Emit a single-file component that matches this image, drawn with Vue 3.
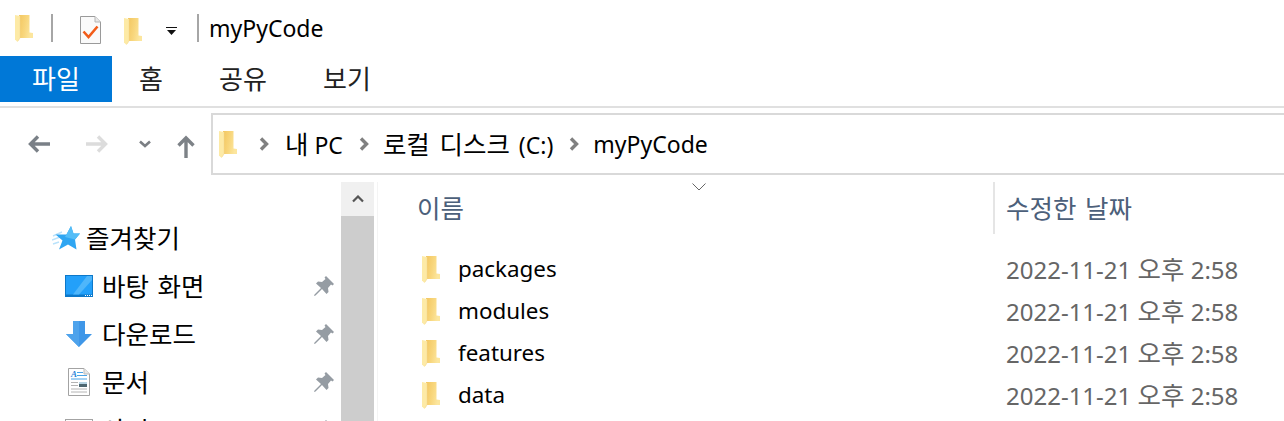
<script setup>
const quick = ['packages', 'modules', 'features', 'data']
</script>

<template>
  <div class="window">
    <svg class="defs" width="0" height="0" aria-hidden="true">
      <defs>
        <linearGradient id="fg" x1="0" y1="0" x2="1" y2="0.3">
          <stop offset="0" stop-color="#f3c65f" />
          <stop offset="0.55" stop-color="#f8d67c" />
          <stop offset="1" stop-color="#fce69e" />
        </linearGradient>
        <symbol id="folder" viewBox="0 0 18 27">
          <path d="M4 0H14.5V17.5L18 18V23H4Z" fill="url(#fg)" />
          <path d="M0 0L5 1V23L4.5 24L2.5 27L0 24.5Z" fill="#fdeaa6" />
          <path d="M5 1V23L3 26" fill="none" stroke="#f0d590" stroke-width=".5" />
        </symbol>
        <symbol id="pin" viewBox="0 0 20 20">
          <path d="M12 0L20 8L18.500 9.500L17 8.500L14 12L14.500 16L12.500 18L8 13L1.500 19.500L0 20L.5 18.500L7 12L2 7.500L4 5.500L8 6L11.500 3L10.500 1.500Z" fill="#959ca3" />
        </symbol>
      </defs>
    </svg>

    <header class="titlebar">
      <svg class="folder"><use href="#folder" /></svg>
      <span class="sep sep-a"></span>
      <svg class="doc" viewBox="0 0 21 28" width="21" height="28">
        <path d="M.5.5H15L20.500 6V27.500H.5Z" fill="#fafafa" stroke="#9a9a9a" />
        <path d="M15 .5V6H20.500" fill="#e8e8e8" stroke="#b5b5b5" />
        <path d="M3.500 15.500L8.500 21L17.500 10.500" fill="none" stroke="#f25c19" stroke-width="2.600" />
      </svg>
      <svg class="folder folder-b"><use href="#folder" /></svg>
      <svg class="drop" viewBox="0 0 11 8" width="11" height="8">
        <path d="M0 .5H11" stroke="#111" />
        <path d="M1 3H10L5.500 8Z" fill="#111" />
      </svg>
      <span class="sep sep-b"></span>
      <span class="title">myPyCode</span>
    </header>

    <nav class="tabs">
      <a class="tab tab-file">파일</a>
      <a class="tab tab-home">홈</a>
      <a class="tab tab-share">공유</a>
      <a class="tab tab-view">보기</a>
    </nav>

    <section class="toolbar">
      <div class="navs">
        <svg viewBox="0 0 22 18" width="22" height="18">
          <path d="M22 9H3M10 1.500L2.500 9L10 16.500" fill="none" stroke="#7a8087" stroke-width="3.400" />
        </svg>
        <svg class="forward" viewBox="0 0 22 18" width="22" height="18">
          <path d="M0 9H19M12 1.500L19.500 9L12 16.500" fill="none" stroke="#dcdcdc" stroke-width="3.400" />
        </svg>
        <svg class="recent" viewBox="0 0 12 8" width="12" height="8">
          <path d="M1 1.500L6 6L11 1.500" fill="none" stroke="#7b7f84" stroke-width="2.600" />
        </svg>
        <svg class="up" viewBox="0 0 18 23" width="18" height="23">
          <path d="M9 23V3M1.500 10.500L9 3L16.500 10.500" fill="none" stroke="#7d8287" stroke-width="3.400" />
        </svg>
      </div>
      <div class="address">
        <svg class="folder"><use href="#folder" /></svg>
        <svg class="crumb crumb-first" viewBox="0 0 10 14" width="10" height="14"><path d="M2 1.500L7.500 7L2 12.500" fill="none" stroke="#808080" stroke-width="3.400" /></svg>
        <span class="part"><span class="ko">내</span> PC</span>
        <svg class="crumb" viewBox="0 0 10 14" width="10" height="14"><path d="M2 1.500L7.500 7L2 12.500" fill="none" stroke="#808080" stroke-width="3.400" /></svg>
        <span class="part part-disk"><span class="ko">로컬 디스크</span> (C:)</span>
        <svg class="crumb" viewBox="0 0 10 14" width="10" height="14"><path d="M2 1.500L7.500 7L2 12.500" fill="none" stroke="#808080" stroke-width="3.400" /></svg>
        <span class="part">myPyCode</span>
      </div>
    </section>

    <main class="body">
      <aside class="side">
        <div class="tree">
          <div class="row fav">
            <svg class="star" viewBox="0 0 28 24" width="28" height="24">
              <path d="M1 10L10 6M0 14L8 11M1 18L7 16" stroke="#b9e2fb" stroke-width="1.400" />
              <path d="M19 0L21.500 7.500H28L23 13.500L24.500 23.500L16 18.500L7 23.500L10.500 14.500L3.500 8.500H14.500Z" fill="#2fa6f2" />
              <path d="M19 0L21.500 7.500H28L23 13.500L13 11Z" fill="#54bdf7" />
            </svg>
            <span class="ko">즐겨찾기</span>
          </div>
          <div class="row item">
            <svg class="ico" viewBox="0 0 28 22" width="28" height="22">
              <rect width="28" height="22" fill="#0d78c9" />
              <rect x="1" y="1" width="26" height="18.500" fill="#23a0fa" />
              <path d="M8 19.500L22 1H27V5L14 19.500Z" fill="#4fb6fb" />
              <path d="M20 20.500H27" stroke="#fff" stroke-dasharray="1 1" />
            </svg>
            <span class="ko">바탕 화면</span>
            <svg class="pin"><use href="#pin" /></svg>
          </div>
          <div class="row item">
            <svg class="ico" viewBox="0 0 28 26" width="28" height="26">
              <path d="M8 0H20V13H27L14 26L1 13H8Z" fill="#3f97e8" />
              <path d="M8 0H14V26L1 13H8Z" fill="#4ea3ec" />
            </svg>
            <span class="ko">다운로드</span>
            <svg class="pin"><use href="#pin" /></svg>
          </div>
          <div class="row item">
            <svg class="ico" viewBox="0 0 28 28" width="28" height="28">
              <path d="M3.500.5H19L24.500 6V27.500H3.500Z" fill="#fff" stroke="#a3a3a3" />
              <path d="M19 .5V6H24.500" fill="#e6e6e6" stroke="#bbb" />
              <text x="6" y="9" class="doc-a">A</text>
              <path d="M12 4.500H18M12 7.500H22M6 11H22" stroke="#4aa3e6" />
              <path d="M6 14.500H13M6 17.500H13M6 21H22M6 24H22" stroke="#b4b4b4" />
              <rect x="14" y="14" width="8" height="5" fill="#4d6670" />
              <rect x="14" y="14" width="8" height="2" fill="#b6d4e4" />
            </svg>
            <span class="ko">문서</span>
            <svg class="pin"><use href="#pin" /></svg>
          </div>
          <div class="row item">
            <svg class="ico" viewBox="0 0 28 22" width="28" height="22">
              <rect x=".5" y=".5" width="27" height="21" fill="#fff" stroke="#a3a3a3" />
            </svg>
            <span class="ko">사진</span>
            <svg class="pin"><use href="#pin" /></svg>
          </div>
        </div>
        <div class="scrollbar">
          <div class="scroll-up">
            <svg viewBox="0 0 12 8" width="12" height="8"><path d="M1 6.500L6 1.500L11 6.500" fill="none" stroke="#555" stroke-width="2.200" /></svg>
          </div>
          <div class="thumb"></div>
        </div>
        <div class="splitter"></div>
      </aside>

      <div class="files">
        <svg class="sort" viewBox="0 0 14 8" width="14" height="8"><path d="M.5 .5L7 7L13.500 .5" fill="none" stroke="#666" /></svg>
        <div class="head">
          <div class="col-name ko">이름</div>
          <div class="col-date ko">수정한 날짜</div>
        </div>
        <div v-for="name in quick" :key="name" class="file">
          <div class="file-name">
            <svg class="folder"><use href="#folder" /></svg>
            <span>{{ name }}</span>
          </div>
          <div class="file-date">2022-11-21 <span class="ko">오후</span> 2:58</div>
        </div>
      </div>
    </main>
  </div>
</template>

<style scoped>
.window {
  width: 1284px;
  height: 421px;
  overflow: hidden;
  background: #fff;
  color: #000;
  font-family: "Noto Sans", "Noto Sans CJK KR", sans-serif;
  font-size: 23px;
  line-height: 32px;
}
.ko { font-size: 25.5px; word-spacing: 2px; }
.defs { position: absolute; }
.folder { width: 18px; height: 27px; flex: none; }
.titlebar {
  height: 56px;
  display: flex;
  align-items: center;
  padding-left: 15px;
}
.sep { width: 2px; height: 28px; background: #a6a6a6; flex: none; }
.sep-a { margin-left: 18px; }
.doc { margin-left: 27px; flex: none; margin-top: 4px; }
.folder-b { margin-left: 23px; margin-top: 6px; }
.drop { margin-left: 24px; flex: none; margin-top: 5px; }
.sep-b { margin-left: 20px; }
.title { margin-left: 10px; }
.tabs { height: 46px; display: flex; align-items: center; }
.tab { display: flex; align-items: center; justify-content: center; height: 46px; font-size: 26px; color: #222; }
.tab-file { width: 112px; background: #0078d7; color: #fff; }
.tab-home { width: 78px; }
.tab-share { width: 106px; }
.tab-view { width: 102px; }
.toolbar {
  margin-top: 4px;
  border-top: 2px solid #e0e0e0;
  height: 76px;
  display: flex;
  align-items: flex-start;
  box-sizing: border-box;
  padding-top: 5px;
}
.navs { width: 211px; height: 62px; display: flex; align-items: center; padding-left: 28px; box-sizing: border-box; flex: none; }
.forward { margin-left: 36px; }
.recent { margin-left: 31px; }
.up { margin-left: 26px; margin-top: 4px; }
.address {
  flex: 1;
  height: 62px;
  box-sizing: border-box;
  border: 2px solid #d9d9d9;
  border-right: none;
  display: flex;
  align-items: center;
  padding-left: 6px;
}
.crumb { margin: 0 14px 0 16px; flex: none; }
.crumb-first { margin: 0 16px 0 22px; }
.part { white-space: nowrap; }
.part-disk { word-spacing: 3px; }
.part-disk .ko { word-spacing: 3px; }
.body { display: flex; height: 239px; }
.side { width: 378px; flex: none; display: flex; }
.tree { width: 341px; flex: none; padding-top: 32px; box-sizing: border-box; }
.row { height: 48px; display: flex; align-items: center; }
.fav { padding-left: 52px; gap: 6px; }
.item { padding-left: 65px; position: relative; }
.ico { margin-right: 9px; flex: none; }
.pin { width: 20px; height: 20px; margin-left: auto; margin-right: 7px; flex: none; }
.doc-a { font: italic bold 9px "Liberation Serif", serif; fill: #2b86d8; }
.scrollbar { width: 33px; flex: none; background: #cdcdcd; }
.scroll-up { height: 34px; background: #f0f0f0; display: flex; align-items: center; justify-content: center; }
.splitter { width: 1px; margin-left: 3px; background: #f4f4f4; }
.files { flex: 1; position: relative; }
.sort { position: absolute; left: 314px; top: 1px; }
.head { height: 52px; display: flex; color: #4c607a; margin-bottom: 14px; }
.col-name { width: 615px; padding-left: 39px; box-sizing: border-box; display: flex; align-items: center; height: 52px; }
.col-date { border-left: 2px solid #e5e5e5; padding-left: 11px; display: flex; align-items: center; height: 52px; }
.file { height: 42px; display: flex; align-items: center; }
.file-name { width: 628px; display: flex; align-items: center; gap: 18px; padding-left: 44px; box-sizing: border-box; flex: none; font-size: 22.4px; }
.file-date { color: #666; font-size: 24px; }
</style>
